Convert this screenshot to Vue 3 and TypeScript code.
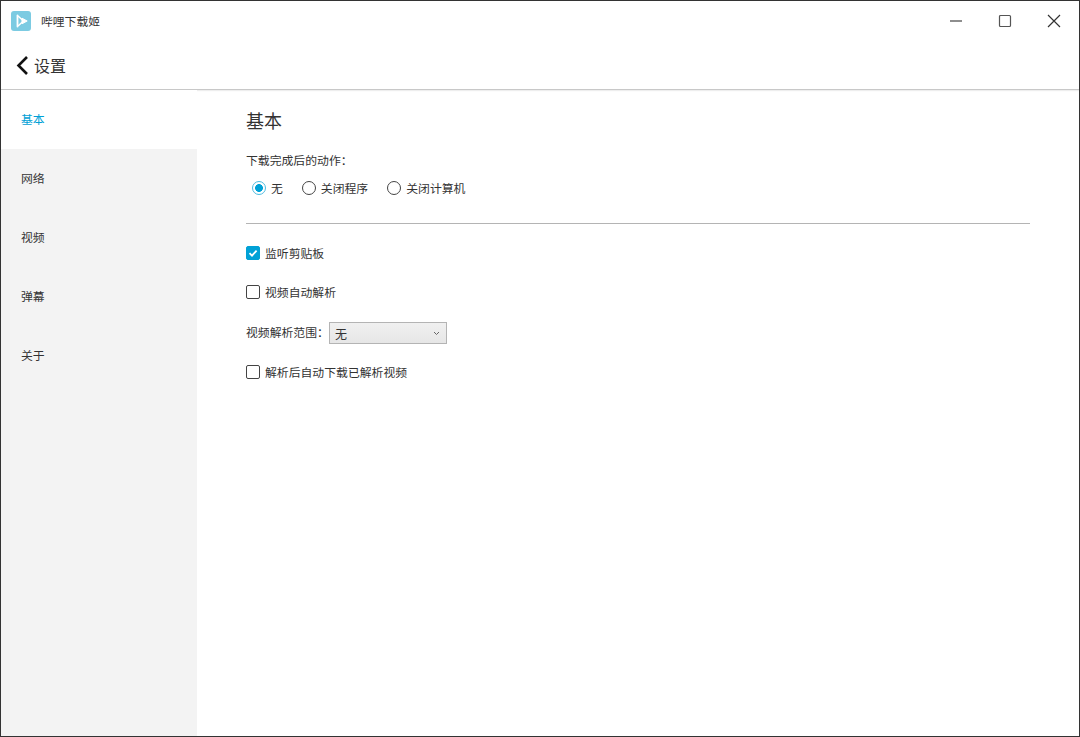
<script setup lang="ts">
const navItems: string[] = ['基本', '网络', '视频', '弹幕', '关于']
const radios: { label: string; checked: boolean }[] = [
  { label: '无', checked: true },
  { label: '关闭程序', checked: false },
  { label: '关闭计算机', checked: false },
]
</script>

<template>
  <div class="window">
    <header class="titlebar">
      <div class="app">
        <svg class="logo" width="20" height="20" viewBox="0 0 20 20">
          <rect width="20" height="20" rx="3" fill="#7ccbe2" />
          <path d="M6.5 4.5v11" stroke="#fff" stroke-width="1.8" stroke-linecap="round" />
          <path d="M7 5l5.5 5L7 15" fill="none" stroke="#fff" stroke-width="1.5" />
          <path d="M11 7.2 16.2 10 11 12.8Z" fill="#fff" stroke="#fff" stroke-width="1" stroke-linejoin="round" />
        </svg>
        <span class="app-name">哔哩下载姬</span>
      </div>
      <div class="controls">
        <svg width="14" height="14" viewBox="0 0 14 14"><path d="M1 7h12" stroke="#444" stroke-width="1.2" /></svg>
        <svg width="14" height="14" viewBox="0 0 14 14"><rect x="1.5" y="1.5" width="11" height="11" rx="1" fill="none" stroke="#555" stroke-width="1.2" /></svg>
        <svg width="14" height="14" viewBox="0 0 14 14"><path d="M1 1l12 12M13 1 1 13" stroke="#333" stroke-width="1.2" /></svg>
      </div>
    </header>
    <div class="pagehead">
      <svg width="12" height="20" viewBox="0 0 12 20"><path d="M11 2 2.5 10.5 11 19" fill="none" stroke="#111" stroke-width="2.6" /></svg>
      <span class="page-title">设置</span>
    </div>
    <div class="body">
      <nav class="sidebar">
        <div v-for="(item, i) in navItems" :key="item" class="nav-item" :class="{ active: i === 0 }">{{ item }}</div>
      </nav>
      <main class="content">
        <h1 class="heading">基本</h1>
        <div class="label after">下载完成后的动作：</div>
        <div class="radios">
          <label v-for="r in radios" :key="r.label" class="radio-row">
            <span class="radio" :class="{ on: r.checked }"></span>
            <span class="label">{{ r.label }}</span>
          </label>
        </div>
        <div class="divider"></div>
        <label class="check-row first">
          <span class="check on">
            <svg width="10" height="10" viewBox="0 0 10 10"><path d="M1.5 5.2 4 7.6 8.6 2.6" fill="none" stroke="#fff" stroke-width="1.8" /></svg>
          </span>
          <span class="label">监听剪贴板</span>
        </label>
        <label class="check-row second">
          <span class="check"></span>
          <span class="label">视频自动解析</span>
        </label>
        <div class="range">
          <span class="label">视频解析范围：</span>
          <div class="select">
            <span>无</span>
            <svg width="7" height="5" viewBox="0 0 7 5"><path d="M1 1l2.5 2.5L6 1" fill="none" stroke="#666" stroke-width="1" /></svg>
          </div>
        </div>
        <label class="check-row third">
          <span class="check"></span>
          <span class="label">解析后自动下载已解析视频</span>
        </label>
      </main>
    </div>
  </div>
</template>

<style>
html, body { margin: 0; padding: 0; background: #fff; }
</style>

<style scoped>
.window {
  box-sizing: border-box;
  width: 1080px;
  height: 737px;
  border: 1px solid #333;
  background: #fff;
  display: flex;
  flex-direction: column;
  overflow: hidden;
  font-family: "Noto Sans CJK SC", "Liberation Sans", sans-serif;
  color: #333;
}
.titlebar {
  height: 39px;
  display: flex;
  align-items: center;
  justify-content: space-between;
  flex: none;
}
.app { display: flex; align-items: center; padding-left: 10px; }
.logo { display: block; }
.app-name { margin-left: 10px; font-size: 11.8px; color: #333; }
.controls { display: flex; gap: 35px; padding-right: 18px; align-items: center; }
.controls svg { display: block; }
.pagehead {
  height: 50px;
  flex: none;
  box-sizing: border-box;
  display: flex;
  align-items: center;
  padding-left: 15px;
  border-bottom: 1px solid #c8c8c8;
  box-shadow: 0 1px 1px #eee;
}
.page-title { margin-left: 6px; font-size: 16px; color: #333; }
.body { flex: 1; display: flex; min-height: 0; }
.sidebar {
  width: 196px;
  flex: none;
  background: #f3f3f3;
}
.nav-item {
  height: 59px;
  box-sizing: border-box;
  padding-left: 20px;
  padding-top: 20.4px;
  font-size: 11.85px;
  line-height: 18px;
  color: #333;
}
.nav-item.active { background: #fff; color: #00a1d6; }
.content { flex: 1; padding: 0 49px 0 49px; }
.heading {
  margin: 17px 0 0;
  font-size: 18px;
  line-height: 26px;
  font-weight: 400;
  color: #333;
}
.label { font-size: 11.85px; line-height: 18px; color: #333; }
.after { margin-top: 18px; }
.radios { display: flex; margin-top: 10px; padding-left: 6px; }
.radio-row { display: flex; align-items: center; margin-right: 19px; }
.radio {
  box-sizing: border-box;
  width: 14px;
  height: 14px;
  border: 1.5px solid #444;
  border-radius: 50%;
  margin-right: 5px;
}
.radio.on {
  border-color: #4dbbe0;
  background: radial-gradient(circle, #00a1d6 0 3.6px, #fff 4.2px);
}
.divider { height: 1px; background: #b4b4b4; margin-top: 26px; }
.check-row { display: flex; align-items: center; }
.check {
  box-sizing: border-box;
  width: 14px;
  height: 14px;
  border: 1.5px solid #444;
  border-radius: 2px;
  margin-right: 5px;
  display: flex;
  align-items: center;
  justify-content: center;
}
.check.on { background: #00a1d6; border-color: #00a1d6; }
.first { margin-top: 20px; }
.second { margin-top: 21px; }
.range { display: flex; align-items: center; margin-top: 19px; }
.select {
  box-sizing: border-box;
  width: 118px;
  height: 22px;
  margin-top: 2px;
  padding: 0 6px 0 5px;
  border: 1px solid #b4b4b4;
  background: linear-gradient(#f0f0f0, #e6e6e6);
  display: flex;
  align-items: center;
  justify-content: space-between;
  font-size: 12px;
  color: #333;
}
.third { margin-top: 19px; }
</style>
